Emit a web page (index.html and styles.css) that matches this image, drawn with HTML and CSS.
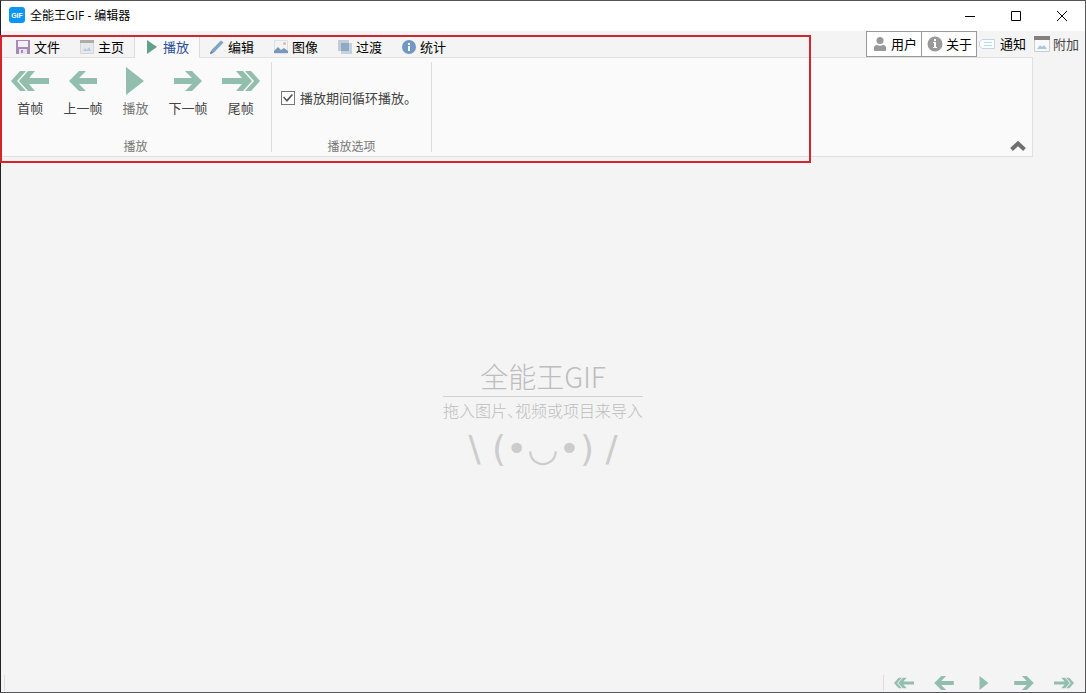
FILE: index.html
```
<!DOCTYPE html>
<html lang="zh-CN">
	<head>
		<meta charset="UTF-8">
		<title>全能王GIF - 编辑器</title>
		<link rel="stylesheet" href="styles.css">
	</head>
	<body>
		<!--公用图标-->
		<svg class="defs" aria-hidden="true">
			<symbol id="first" viewBox="0 0 38 20">
				<path d="M0 10L9 0H15L6 10L15 20H9Z"/>
				<path d="M8 10L17 0H24L18 7H38V13H18L24 20H17Z"/>
			</symbol>
			<symbol id="prev" viewBox="0 0 28 20">
				<path d="M0 10L10 0H17L10 7H28V13H10L17 20H10Z"/>
			</symbol>
			<symbol id="play" viewBox="0 0 18 28">
				<path d="M0 0L18 14L0 28Z"/>
			</symbol>
			<symbol id="next" viewBox="0 0 28 20">
				<path d="M28 10L18 0H11L18 7H0V13H18L11 20H18Z"/>
			</symbol>
			<symbol id="last" viewBox="0 0 38 20">
				<path d="M38 10L29 0H23L32 10L23 20H29Z"/>
				<path d="M30 10L21 0H14L20 7H0V13H20L14 20H21Z"/>
			</symbol>
		</svg>
		<div class="window">
			<header class="title_bar">
				<svg class="logo" viewBox="0 0 16 16"><rect width="16" height="16" rx="3" fill="#0b96f5"/><text x="8" y="11" text-anchor="middle">GIF</text></svg>
				<h1>全能王GIF - 编辑器</h1>
				<div class="win_btns">
					<button type="button" aria-label="最小化"><svg viewBox="0 0 10 10"><path d="M0 5.5H10"/></svg></button>
					<button type="button" aria-label="最大化"><svg viewBox="0 0 10 10"><path d="M.5 .5H9.500V9.500H.5Z"/></svg></button>
					<button type="button" aria-label="关闭"><svg viewBox="0 0 10 10"><path d="M0 0L10 10M10 0L0 10"/></svg></button>
				</div>
			</header>
			<div class="tab_bar">
				<nav class="tabs">
					<button type="button">
						<svg viewBox="0 0 14 14"><path d="M0 0H14V14H0Z" fill="#a78bb6"/><path d="M2 1H12V7H2Z" fill="#f4f1f6"/><path d="M3 9H11V14H3Z" fill="#e9e2ee"/><path d="M5 10H7V13H5Z" fill="#a78bb6"/></svg>文件</button>
					<button type="button">
						<svg viewBox="0 0 14 14"><path d="M.5 .5H13.5V13.5H.5Z" fill="#e6e9ec" stroke="#d5d5d5"/><path d="M0 0H14V3H0Z" fill="#b3aaa8"/><path d="M3 11L5 8L7 10L9 7L11 11Z" fill="#b9cad8"/></svg>主页</button>
					<button type="button" class="active">
						<svg viewBox="0 0 14 14"><path d="M2 0L12 7L2 14Z" fill="#62a18b"/></svg>播放</button>
					<button type="button">
						<svg viewBox="0 0 14 14"><path d="M0 14L1.500 10L11 .5L13.5 2.500L4 12.500Z" fill="#7fa3c7"/><path d="M0 14L1 11L3 13Z" fill="#66788c"/></svg>编辑</button>
					<button type="button">
						<svg viewBox="0 0 14 14"><path d="M.5 .5H13.5V13.5H.5Z" fill="#f1f3f5" stroke="#dde1e5"/><path d="M0 13V11L4 7L7 10L10 8L14 11V13Z" fill="#7898b8"/><circle cx="10.500" cy="3.500" r="1.500" fill="#e8bc9a"/></svg>图像</button>
					<button type="button">
						<svg viewBox="0 0 14 14"><path d="M0 0H11V11H0Z" fill="#c3ccd5"/><path d="M3 3H14V14H3Z" fill="#c3d2e0"/><path d="M3 3H11V11H3Z" fill="#8faac5"/></svg>过渡</button>
					<button type="button">
						<svg viewBox="0 0 14 14"><circle cx="7" cy="7" r="7" fill="#7197c3"/><path d="M6 3H8V5H6ZM6 6H8V11H6Z" fill="#fff"/></svg>统计</button>
				</nav>
				<div class="extras">
					<button type="button" class="boxed">
						<svg viewBox="0 0 16 16"><circle cx="8" cy="4.500" r="3.500" fill="#999"/><path d="M2 15V12Q2 9 5 9Q8 10.500 11 9Q14 9 14 12V15Z" fill="#999"/></svg>用户</button>
					<button type="button" class="boxed">
						<svg viewBox="0 0 16 16"><circle cx="8" cy="8" r="7.500" fill="#999"/><path d="M7 3H9V5H7ZM6 6H9V11H10V12H6V11H7V7H6Z" fill="#fff"/></svg>关于</button>
					<button type="button" class="notice">
						<svg viewBox="0 0 16 16"><path d="M3 3.500H15.500V12.500H3L.5 10V6Z" fill="#fafcfe" stroke="#c6d3e0"/><path d="M5 6.500H13M5 9.500H13" stroke="#bcd8f0"/></svg>通知</button>
					<button type="button" class="addon">
						<svg viewBox="0 0 16 16"><path d="M.5 .5H15.5V15.5H.5Z" fill="#f8f9fb" stroke="#ccc"/><path d="M0 0H16V4H0Z" fill="#867e7e"/><path d="M3 13L6 9L8 11L10 9L13 13Z" fill="#adc6e0"/></svg>附加</button>
				</div>
			</div>
			<section class="ribbon">
				<div class="group playback">
					<div class="tools">
						<button type="button"><svg class="wide"><use href="#first"/></svg>首帧</button>
						<button type="button"><svg><use href="#prev"/></svg>上一帧</button>
						<button type="button" class="dim"><svg><use href="#play"/></svg>播放</button>
						<button type="button"><svg><use href="#next"/></svg>下一帧</button>
						<button type="button"><svg class="wide"><use href="#last"/></svg>尾帧</button>
					</div>
					<h2>播放</h2>
				</div>
				<div class="group options">
					<label><input type="checkbox" checked>播放期间循环播放。</label>
					<h2>播放选项</h2>
				</div>
				<button type="button" class="collapse" aria-label="折叠"><svg viewBox="0 0 16 10"><path d="M1.500 8.500L8 2.500L14.500 8.500"/></svg></button>
			</section>
			<main>
				<div class="welcome">
					<h2>全能王GIF</h2>
					<p class="hint">拖入图片、视频或项目来导入</p>
					<p class="face">\ (•◡•) /</p>
				</div>
			</main>
			<footer>
				<span class="line"></span>
				<div class="player">
					<button type="button" aria-label="首帧"><svg><use href="#first"/></svg></button>
					<button type="button" aria-label="上一帧"><svg><use href="#prev"/></svg></button>
					<button type="button" aria-label="播放"><svg><use href="#play"/></svg></button>
					<button type="button" aria-label="下一帧"><svg><use href="#next"/></svg></button>
					<button type="button" aria-label="尾帧"><svg><use href="#last"/></svg></button>
				</div>
			</footer>
			<div class="mark"></div> <!--红色标注框-->
		</div>
	</body>
</html>
```
FILE: styles.css
```
*{
	margin: 0;
	padding: 0;
	box-sizing: border-box;
}
body{
	font: 13px/18px "Noto Sans CJK SC",sans-serif;
	color: #000;
}
button{
	border: 0;
	background: none;
	font: inherit;
	color: inherit;
	white-space: nowrap;
}
h1,h2{
	font-weight: normal;
}
.defs{
	position: absolute;
	width: 0;
	height: 0;
}
.window{
	position: relative;
	display: flex;
	flex-direction: column;
	min-height: 100vh;
	border: 1px solid #55555a;
	border-left-color: #222;
	background: #f4f4f4;
}
.title_bar{
	display: flex;
	align-items: center;
	height: 30px;
	padding-left: 8px;
	background: #fff;
}
.logo{
	width: 16px;
	height: 16px;
	margin: -2px 5px 0 0;
}
.logo text{
	font: bold 7px "Liberation Sans",sans-serif;
	fill: #fff;
}
.title_bar h1{
	font: 12px/18px "Open Sans","Noto Sans CJK SC",sans-serif;
}
.win_btns{
	display: flex;
	margin-left: auto;
}
.win_btns button{
	display: flex;
	align-items: center;
	justify-content: center;
	width: 46px;
	height: 28px;
}
.win_btns svg{
	width: 10px;
	height: 10px;
	overflow: visible;
	fill: none;
	stroke: #000;
}
.tab_bar{
	display: flex;
	justify-content: space-between;
	height: 26px;
}
.tabs{
	display: flex;
	align-items: flex-end;
	padding: 5px 0 0 5px;
}
.tabs button{
	display: flex;
	align-items: center;
	gap: 4px;
	height: 21px;
	padding: 0 10px;
}
.tabs svg{
	width: 14px;
	height: 14px;
}
.tabs .active{
	position: relative;
	z-index: 1;
	height: 22px;
	margin-bottom: -1px;
	border: 1px solid #dcdcdc;
	border-width: 0 1px;
	background: #fafafa;
	color: #2b4f96;
}
.extras{
	display: flex;
	padding-right: 6px;
}
.extras button{
	display: flex;
	align-items: center;
	gap: 3px;
}
.extras svg{
	width: 16px;
	height: 16px;
}
.extras .boxed{
	width: 56px;
	margin-right: -1px;
	padding-left: 5px;
	border: 1px solid #999;
	background: #fff;
}
.extras .notice{
	margin: 0 8px 0 3px;
	gap: 5px;
}
.extras .addon{
	color: #444;
}
.ribbon{
	position: relative;
	display: flex;
	height: 100px;
	margin-right: 52px;
	padding: 4px 0;
	border: 1px solid #e0e0e0;
	border-left: 0;
	background: #fafafa;
	color: #444;
}
.group{
	display: flex;
	flex-direction: column;
	justify-content: space-between;
	border-right: 1px solid #dcdcdc;
}
.group h2{
	font-size: 12px;
	line-height: 12px;
	text-align: center;
	color: #777;
}
.playback{
	width: 271px;
	padding: 0 4px 0 3px;
}
.tools{
	display: flex;
}
.tools button{
	display: flex;
	flex: 1;
	flex-direction: column;
	align-items: center;
	gap: 4px;
	padding-top: 5px;
}
.tools .dim{
	color: #777;
}
.tools svg{
	width: 28px;
	height: 28px;
}
.tools .wide{
	width: 38px;
}
.tools svg,.player svg{
	fill: #92bead;
}
.options{
	width: 160px;
	padding-top: 27px;
}
.options label{
	display: flex;
	align-items: center;
	gap: 5px;
	padding-left: 9px;
	white-space: nowrap;
}
.options input{
	appearance: none;
	display: grid;
	place-items: center;
	width: 14px;
	height: 14px;
	border: 1px solid #777;
	background: #fff;
}
.options input:checked::before{
	content: "";
	width: 10px;
	height: 8px;
	background: #555;
	clip-path: polygon(0 45%,12% 30%,38% 68%,88% 0,100% 12%,40% 100%);
}
.collapse{
	position: absolute;
	right: 6px;
	bottom: 5px;
	width: 17px;
	height: 14px;
}
.collapse svg{
	width: 16px;
	height: 10px;
	fill: none;
	stroke: #707070;
	stroke-width: 4px;
}
main{
	display: flex;
	flex: 1;
	align-items: center;
	justify-content: center;
}
.welcome{
	text-align: center;
	color: #bdbdbd;
	font-weight: 300;
}
.welcome h2{
	border-bottom: 1px solid #d2d2d2;
	font-size: 28px;
	line-height: 40px;
	font-weight: 300;
}
.hint{
	font-size: 16px;
	line-height: 26px;
	font-feature-settings: "halt";
}
.face{
	font: 36px/52px "DejaVu Sans",sans-serif;
	color: #ccc;
}
footer{
	display: flex;
	align-items: center;
	justify-content: space-between;
	height: 18px;
	padding: 0 1px 1px 3px;
}
.line{
	width: 1px;
	height: 16px;
	background: #dcdcdc;
}
.player{
	display: flex;
	border-left: 1px solid #dcdcdc;
}
.player button{
	display: flex;
	align-items: center;
	justify-content: center;
	width: 40px;
	height: 16px;
}
.player svg{
	width: 20px;
	height: 14px;
}
.mark{
	position: absolute;
	top: 34px;
	left: -1px;
	width: 811px;
	height: 128px;
	border: 2px solid #d5252c;
	z-index: 2;
	pointer-events: none;
}
```
